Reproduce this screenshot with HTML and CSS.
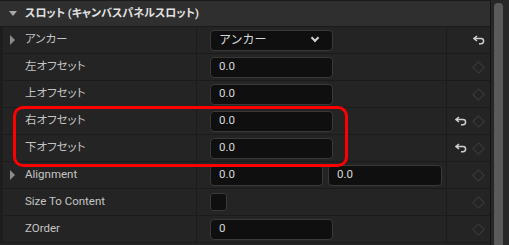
FILE: index.html
```html
<!DOCTYPE html>
<html lang="ja">
<head>
	<meta charset="UTF-8">
	<title>スロット (キャンバスパネルスロット)</title>
	<link rel="stylesheet" href="styles.css">
</head>
<body>
	<div class="panel">
		<div class="details">
			<!-- カテゴリ見出し -->
			<div class="category">
				<span class="twisty open"></span>
				<span class="category-title">スロット (キャンバスパネルスロット)</span>
			</div>

			<div class="row">
				<div class="name"><span class="twisty closed"></span>アンカー</div>
				<div class="value">
					<div class="combo"><span>アンカー</span><span class="chevron"></span></div>
				</div>
				<div class="extra">
					<svg class="reset" viewBox="0 0 12 10"><path d="M4 1 L1 3.5 L4 6 M1.5 3.5 H8 a2.6 2.6 0 0 1 0 5.2 H6"/></svg>
				</div>
			</div>

			<div class="row">
				<div class="name"><span class="twisty"></span>左オフセット</div>
				<div class="value"><div class="field">0.0</div></div>
				<div class="extra"><span class="key"></span></div>
			</div>

			<div class="row">
				<div class="name"><span class="twisty"></span>上オフセット</div>
				<div class="value"><div class="field">0.0</div></div>
				<div class="extra"><span class="key"></span></div>
			</div>

			<div class="row">
				<div class="name"><span class="twisty"></span>右オフセット</div>
				<div class="value"><div class="field">0.0</div></div>
				<div class="extra">
					<svg class="reset" viewBox="0 0 12 10"><path d="M4 1 L1 3.5 L4 6 M1.5 3.5 H8 a2.6 2.6 0 0 1 0 5.2 H6"/></svg>
					<span class="key"></span>
				</div>
			</div>

			<div class="row">
				<div class="name"><span class="twisty"></span>下オフセット</div>
				<div class="value"><div class="field">0.0</div></div>
				<div class="extra">
					<svg class="reset" viewBox="0 0 12 10"><path d="M4 1 L1 3.5 L4 6 M1.5 3.5 H8 a2.6 2.6 0 0 1 0 5.2 H6"/></svg>
					<span class="key"></span>
				</div>
			</div>

			<div class="row">
				<div class="name"><span class="twisty closed"></span>Alignment</div>
				<div class="value pair">
					<div class="field short">0.0</div>
					<div class="field wide">0.0</div>
				</div>
				<div class="extra"><span class="key"></span></div>
			</div>

			<div class="row">
				<div class="name"><span class="twisty"></span>Size To Content</div>
				<div class="value"><div class="check"></div></div>
				<div class="extra"><span class="key"></span></div>
			</div>

			<div class="row">
				<div class="name"><span class="twisty"></span>ZOrder</div>
				<div class="value"><div class="field">0</div></div>
				<div class="extra"><span class="key"></span></div>
			</div>

			<div class="row"></div>

			<!-- 注目枠 -->
			<div class="highlight"></div>
		</div>
		<div class="scrollbar"><div class="thumb"></div></div>
	</div>
</body>
</html>
```

FILE: styles.css
```css
* {
	margin: 0;
	padding: 0;
	box-sizing: border-box;
}
body {
	background: #1c1c1c;
	font: normal 11.5px/1 Roboto, "Noto Sans CJK JP", sans-serif;
	color: #c4c4c4;
}
.panel {
	display: flex;
	width: 509px;
	height: 245px;
	overflow: hidden;
}
.details {
	position: relative;
	width: 491px;
	border-right: 1px solid #151515;
}

/* 見出し */
.category {
	display: flex;
	align-items: center;
	height: 27px;
	padding-left: 9px;
	background: #2f2f2f;
	border-top: 1px solid #1a1a1a;
	border-bottom: 1px solid #1a1a1a;
}
.category-title {
	font-weight: bold;
	font-size: 11px;
	color: #e2e2e2;
	font-feature-settings: "palt";
}
.twisty {
	display: inline-block;
	flex: none;
	width: 16px;
	position: relative;
	height: 10px;
}
.name .twisty {
	width: 15px;
}
.twisty.open:before {
	content: "";
	position: absolute;
	left: 0;
	top: 2px;
	border-left: 4px solid transparent;
	border-right: 4px solid transparent;
	border-top: 5px solid #a8a8a8;
}
.twisty.closed:before {
	content: "";
	position: absolute;
	left: 0;
	top: 0;
	border-top: 5px solid transparent;
	border-bottom: 5px solid transparent;
	border-left: 5px solid #8c8c8c;
}

/* 行 */
.row {
	display: grid;
	grid-template-columns: 197px 250px 1fr;
	height: 27px;
	background: #242424;
	border-bottom: 1px solid #1b1b1b;
}
.name {
	display: flex;
	align-items: center;
	padding-left: 7px;
	border-left: 3px solid #1d1d1d;
	border-right: 1px solid #1b1b1b;
	font-feature-settings: "palt";
}
.value {
	display: flex;
	align-items: center;
	padding-left: 13px;
	border-right: 1px solid #1b1b1b;
}
.extra {
	display: flex;
	align-items: center;
	justify-content: flex-end;
	gap: 7px;
	padding-right: 5px;
}

/* 入力欄 */
.field,
.combo {
	display: flex;
	align-items: center;
	width: 123px;
	height: 21px;
	padding-left: 8px;
	background: #0f0f0f;
	border: 1px solid #393939;
	border-radius: 4px;
	color: #d8d8d8;
}
.combo {
	justify-content: space-between;
	padding-right: 14px;
	font-size: 12px;
}
.chevron {
	width: 6px;
	height: 6px;
	margin-top: -4px;
	border-right: 2px solid #d0d0d0;
	border-bottom: 2px solid #d0d0d0;
	transform: rotate(45deg);
}
.pair {
	gap: 5px;
}
.field.short {
	width: 113px;
}
.field.wide {
	width: 114px;
}
.check {
	width: 17px;
	height: 18px;
	background: #0f0f0f;
	border: 1px solid #393939;
	border-radius: 3px;
}

/* リセット・キー */
.reset {
	width: 12px;
	height: 10px;
	fill: none;
	stroke: #cfcfcf;
	stroke-width: 1.5;
}
.key {
	width: 9px;
	height: 9px;
	margin-right: 2px;
	border: 1px solid #3c3c3c;
	transform: rotate(45deg);
}

/* 赤枠 */
.highlight {
	position: absolute;
	left: 13px;
	top: 106px;
	width: 335px;
	height: 61px;
	border: 3px solid #ff0000;
	border-radius: 10px;
}

/* スクロールバー */
.scrollbar {
	flex: 1;
	padding: 3px 6px 0 3px;
	background: #272727;
}
.thumb {
	height: 100%;
	background: #5a5a5a;
	border-radius: 4px 4px 0 0;
}
```
